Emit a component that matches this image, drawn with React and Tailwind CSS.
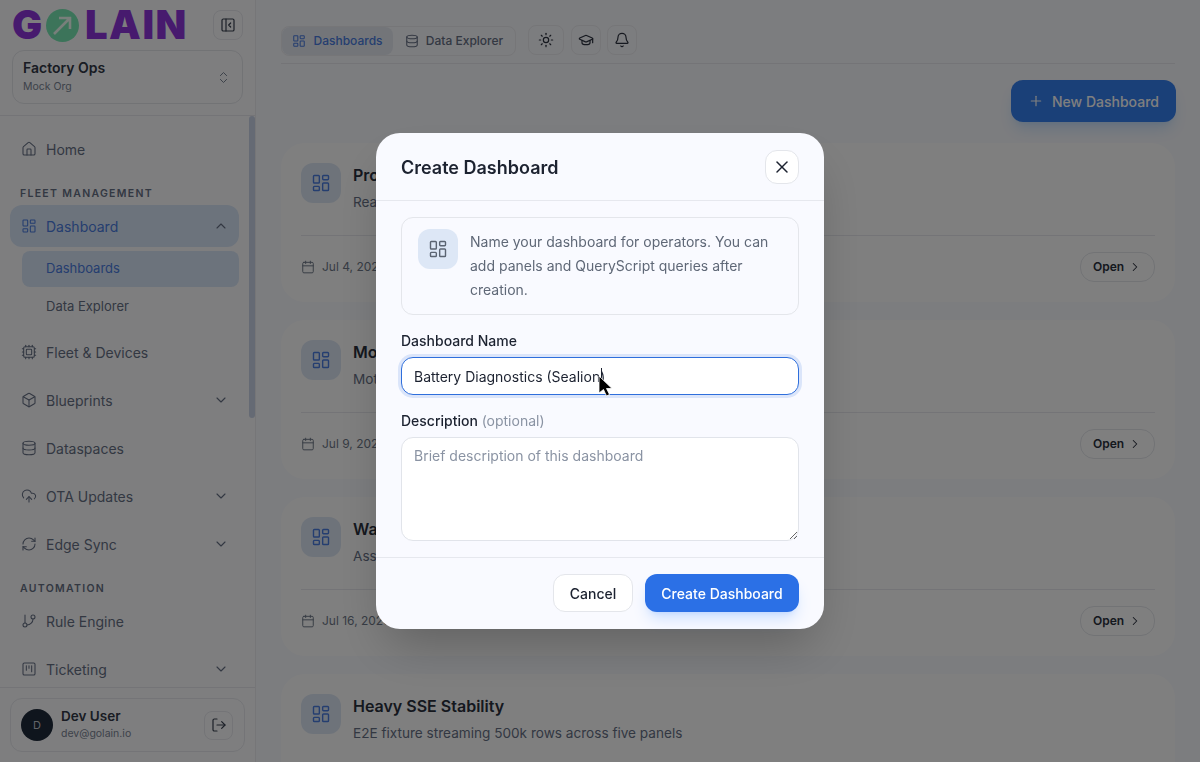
import React from 'react';
import {
  Bell, Box, Calendar, ChevronDown, ChevronRight, ChevronUp, ChevronsUpDown, CloudUpload, Cpu, Database,
  GitBranch, GraduationCap, House, LayoutDashboard, LogOut, PanelLeftClose, Plus, RefreshCw, SquareKanban, Sun, X,
} from 'lucide-react';

const navTop = [
  { label: 'Fleet & Devices', icon: Cpu },
  { label: 'Blueprints', icon: Box, more: true },
  { label: 'Dataspaces', icon: Database },
  { label: 'OTA Updates', icon: CloudUpload, more: true },
  { label: 'Edge Sync', icon: RefreshCw, more: true },
];

const cards = [
  { title: 'Production Overview', desc: 'Real-time line output', date: 'Jul 4, 2026' },
  { title: 'Motor Health', desc: 'Motor vibration and load', date: 'Jul 9, 2026' },
  { title: 'Warehouse Assets', desc: 'Asset tracking by zone', date: 'Jul 16, 2026' },
  { title: 'Heavy SSE Stability', desc: 'E2E fixture streaming 500k rows across five panels', date: 'Jul 18, 2026' },
];

const NavRow = ({ label, icon: Icon, more }) => (
  <div className="flex h-[42px] shrink-0 items-center rounded-xl pl-[11px] pr-[10px] text-[14px] text-[#667085]">
    <Icon size={16} strokeWidth={1.6} className="mr-[9px] shrink-0" />
    <span className="flex-1">{label}</span>
    {more && <ChevronDown size={16} strokeWidth={1.7} />}
  </div>
);

const Section = ({ children, className }) => (
  <div className={`pl-[10px] text-[10.5px] font-semibold tracking-[1.3px] text-[#667085] ${className}`}>{children}</div>
);

const Sidebar = () => (
  <aside className="relative flex h-full w-[256px] shrink-0 flex-col border-r border-[#ecedf0] bg-[#fdfdff]">
    <div className="h-[116px] shrink-0 border-b border-[#e8e9ee] px-3">
      <div className="flex h-[50px] items-center">
        <div className="flex flex-1 items-center text-[40px] leading-none font-black text-[#8f35dc]">
          <span className="w-[34px]">G</span>
          <svg width="33" height="33" viewBox="0 0 33 33" className="mr-[6px]">
            <circle cx="16.5" cy="16.5" r="16.5" fill="#78e8b4" />
            <path d="M8 25 L24 9 M13 9 H24 V20" fill="none" stroke="#f0fff6" strokeWidth="2.6" />
          </svg>
          <span className="tracking-[1.5px]">LAIN</span>
        </div>
        <div className="flex size-[30px] items-center justify-center rounded-lg border border-[#e8e9ee] text-[#384050]">
          <PanelLeftClose size={16} strokeWidth={1.8} />
        </div>
      </div>
      <div className="flex h-[54px] items-center rounded-xl border border-[#e4e6eb] pl-[10px] pr-[11px]">
        <div className="flex-1">
          <div className="text-[14px] leading-[18px] font-semibold text-[#323846]">Factory Ops</div>
          <div className="mt-px text-[10.5px] leading-[18px] text-[#7a8494]">Mock Org</div>
        </div>
        <ChevronsUpDown size={15} strokeWidth={1.6} className="text-[#7a8494]" />
      </div>
    </div>
    <nav className="flex flex-1 flex-col gap-[6px] overflow-hidden pl-[10px] pr-[16px] pt-3">
      <NavRow label="Home" icon={House} />
      <Section className="mt-[10px] -mb-[2px] leading-[15px]">FLEET MANAGEMENT</Section>
      <div className="flex h-[42px] shrink-0 items-center rounded-xl bg-[#d9e6f8] pl-[11px] pr-[10px] text-[14px] text-[#4a7ce0]">
        <LayoutDashboard size={16} strokeWidth={1.6} className="mr-[9px]" />
        <span className="flex-1">Dashboard</span>
        <ChevronUp size={16} strokeWidth={1.7} className="text-[#667085]" />
      </div>
      <div className="-mt-[2px] ml-3 flex flex-col gap-[2px]">
        <div className="flex h-9 items-center rounded-lg bg-[#d9e6f8] pl-6 text-[13px] text-[#4a7ce0]">Dashboards</div>
        <div className="flex h-9 items-center pl-6 text-[13px] text-[#667085]">Data Explorer</div>
      </div>
      <NavRow {...navTop[0]} />
      <NavRow {...navTop[1]} />
      <NavRow {...navTop[2]} />
      <NavRow {...navTop[3]} />
      <NavRow {...navTop[4]} />
      <Section className="mt-[10px] -mb-[2px] leading-[15px]">AUTOMATION</Section>
      <NavRow label="Rule Engine" icon={GitBranch} />
      <NavRow label="Ticketing" icon={SquareKanban} more />
    </nav>
    <div className="absolute right-0 top-[116px] h-[302px] w-[6px] rounded-full bg-[#cbd5e8]" />
    <div className="h-[75px] shrink-0 border-t border-[#e8e9ee] bg-[#fdfdff] px-[10px] pt-[10px]">
      <div className="flex h-[54px] items-center rounded-xl border border-[#e8e9ee] pl-[10px] pr-[11px]">
        <div className="mr-2 flex size-8 items-center justify-center rounded-full bg-[#1e2a3a] text-[11px] text-[#c4c8d0]">D</div>
        <div className="flex-1">
          <div className="text-[13.5px] leading-[18px] font-semibold text-[#323846]">Dev User</div>
          <div className="text-[10.5px] leading-[18px] text-[#7a8494]">dev@golain.io</div>
        </div>
        <div className="flex size-[29px] items-center justify-center rounded-lg border border-[#e8e9ee] text-[#384050]">
          <LogOut size={16} strokeWidth={1.8} />
        </div>
      </div>
    </div>
  </aside>
);

const DashboardCard = ({ title, desc, date }) => (
  <div className="h-[159px] shrink-0 rounded-3xl bg-white px-5 pt-5">
    <div className="flex h-[72px] gap-3">
      <div className="flex size-10 items-center justify-center rounded-xl bg-[#dde7f5] text-[#4a7ce0]">
        <LayoutDashboard size={20} strokeWidth={1.7} />
      </div>
      <div>
        <div className="text-[16px] leading-6 font-semibold text-[#2a303d]">{title}</div>
        <div className="mt-[5px] text-[13.6px] leading-5 text-[#667085]">{desc}</div>
      </div>
    </div>
    <div className="flex items-center justify-between border-t border-[#e8e9ee] pt-4">
      <div className="flex items-center gap-[7px] text-[12px] text-[#6f7989]">
        <Calendar size={14} strokeWidth={1.7} />
        {date}
      </div>
      <div className="flex h-[30px] w-[75px] items-center justify-center gap-1 rounded-[14px] border border-[#e4e6eb] text-[12px] font-semibold text-[#2a303d]">
        Open
        <ChevronRight size={14} strokeWidth={1.8} />
      </div>
    </div>
  </div>
);

const Main = () => (
  <main className="flex h-full min-w-0 flex-1 flex-col overflow-hidden bg-[#f9fafe] px-[25px]">
    <div className="flex h-[64px] shrink-0 items-start gap-[13px] border-b border-[#e8e9ee] pt-[25px]">
      <div className="mt-px flex h-[30px] w-[235px] rounded-lg border border-[#ecedf1] text-[12px] font-medium">
        <div className="flex w-[111px] items-center justify-center gap-[7px] rounded-lg bg-[#e6ebf3] text-[#4a7ce0]">
          <LayoutDashboard size={14} strokeWidth={1.8} />
          Dashboards
        </div>
        <div className="flex flex-1 items-center justify-center gap-[7px] text-[#667085]">
          <Database size={14} strokeWidth={1.8} />
          Data Explorer
        </div>
      </div>
      <div className="-ml-[1px] flex h-[30px] w-[36px] items-center justify-center rounded-lg border border-[#ecedf1] text-[#2d3340]">
        <Sun size={16} strokeWidth={1.8} />
      </div>
      <div className="-ml-[6px] flex h-[30px] w-[30px] items-center justify-center rounded-lg border border-[#ecedf1] text-[#2d3340]">
        <GraduationCap size={16} strokeWidth={1.8} />
      </div>
      <div className="-ml-[7px] flex h-[30px] w-[30px] items-center justify-center rounded-lg border border-[#ecedf1] text-[#2d3340]">
        <Bell size={16} strokeWidth={1.8} />
      </div>
    </div>
    <div className="-mr-[1px] flex shrink-0 justify-end pt-4">
      <div className="flex h-[42px] w-[165px] items-center justify-center gap-2 rounded-xl bg-[#3580f0] text-[14px] font-medium text-white shadow-lg shadow-blue-300/40">
        <Plus size={16} strokeWidth={1.8} />
        New Dashboard
      </div>
    </div>
    <div className="mt-[21px] flex flex-col gap-[18px]">
      {cards.map((c) => <DashboardCard key={c.title} {...c} />)}
    </div>
  </main>
);

const Modal = () => (
  <div className="absolute inset-0 flex items-start justify-center bg-black/50 pt-[133px] backdrop-blur-[0.5px]">
    <div className="w-[448px] rounded-3xl bg-[#f9faff] shadow-2xl">
      <div className="flex h-[68px] items-center justify-between border-b border-[#e6e8ee] px-[25px]">
        <h2 className="mt-px text-[18px] font-semibold text-[#1c2230]">Create Dashboard</h2>
        <button className="flex size-[34px] items-center justify-center rounded-xl border border-[#e4e6eb] bg-white text-[#1c2230]">
          <X size={20} strokeWidth={1.8} />
        </button>
      </div>
      <div className="px-[25px] pt-4">
        <div className="flex h-[98px] gap-3 rounded-xl border border-[#e4e6eb] px-4 pt-[11px]">
          <div className="flex size-10 shrink-0 items-center justify-center rounded-xl bg-[#dde7f6] text-[#5b6472]">
            <LayoutDashboard size={20} strokeWidth={1.7} />
          </div>
          <p className="mt-px text-[14px] leading-6 text-[#5f6877]">
            Name your dashboard for operators. You can add panels and QueryScript queries after creation.
          </p>
        </div>
        <label className="mt-4 block text-[14px] leading-5 font-medium text-[#1c2230]">Dashboard Name</label>
        <div className="relative mt-[6px]">
          <input
            readOnly
            value="Battery Diagnostics (Sealion)"
            className="block h-[38px] w-full rounded-xl border border-[#2f6fdc] bg-white px-3 text-[14px] text-[#1c2230] ring-3 ring-[#2f6fdc]/15 outline-none"
          />
          <span className="absolute left-[200px] top-[11px] h-[16px] w-px bg-[#1c2230]" />
          <svg width="16" height="24" viewBox="0 0 16 24" className="absolute left-[197px] top-[18px]">
            <path d="M1 1 V18 L5.5 14.5 L8.5 21 L11.5 19.5 L8.5 13.5 H14 Z" fill="#000" stroke="#fff" strokeWidth="0.8" />
          </svg>
        </div>
        <label className="mt-4 block text-[14px] leading-5 font-medium text-[#1c2230]">
          Description <span className="font-normal text-[#8a93a3]">(optional)</span>
        </label>
        <textarea
          readOnly
          placeholder="Brief description of this dashboard"
          className="mt-[6px] block h-[104px] w-full rounded-xl border border-[#e1e4ea] bg-white px-3 py-[8px] text-[14px] leading-5 outline-none placeholder:text-[#8a93a3]"
        />
      </div>
      <div className="mt-4 flex h-[72px] items-start justify-end gap-3 border-t border-[#e6e8ee] px-[25px] pt-4">
        <button className="h-[38px] w-[80px] rounded-xl border border-[#e4e6eb] bg-white text-[14px] font-medium text-[#1c2230]">Cancel</button>
        <button className="h-[38px] w-[154px] rounded-xl bg-[#2b70e6] text-[14px] font-medium text-white shadow-lg shadow-blue-500/20">Create Dashboard</button>
      </div>
    </div>
  </div>
);

export default function App() {
  return (
    <div className="relative flex h-[762px] w-[1200px] overflow-hidden font-[Inter,sans-serif]">
      <Sidebar />
      <Main />
      <Modal />
    </div>
  );
}
